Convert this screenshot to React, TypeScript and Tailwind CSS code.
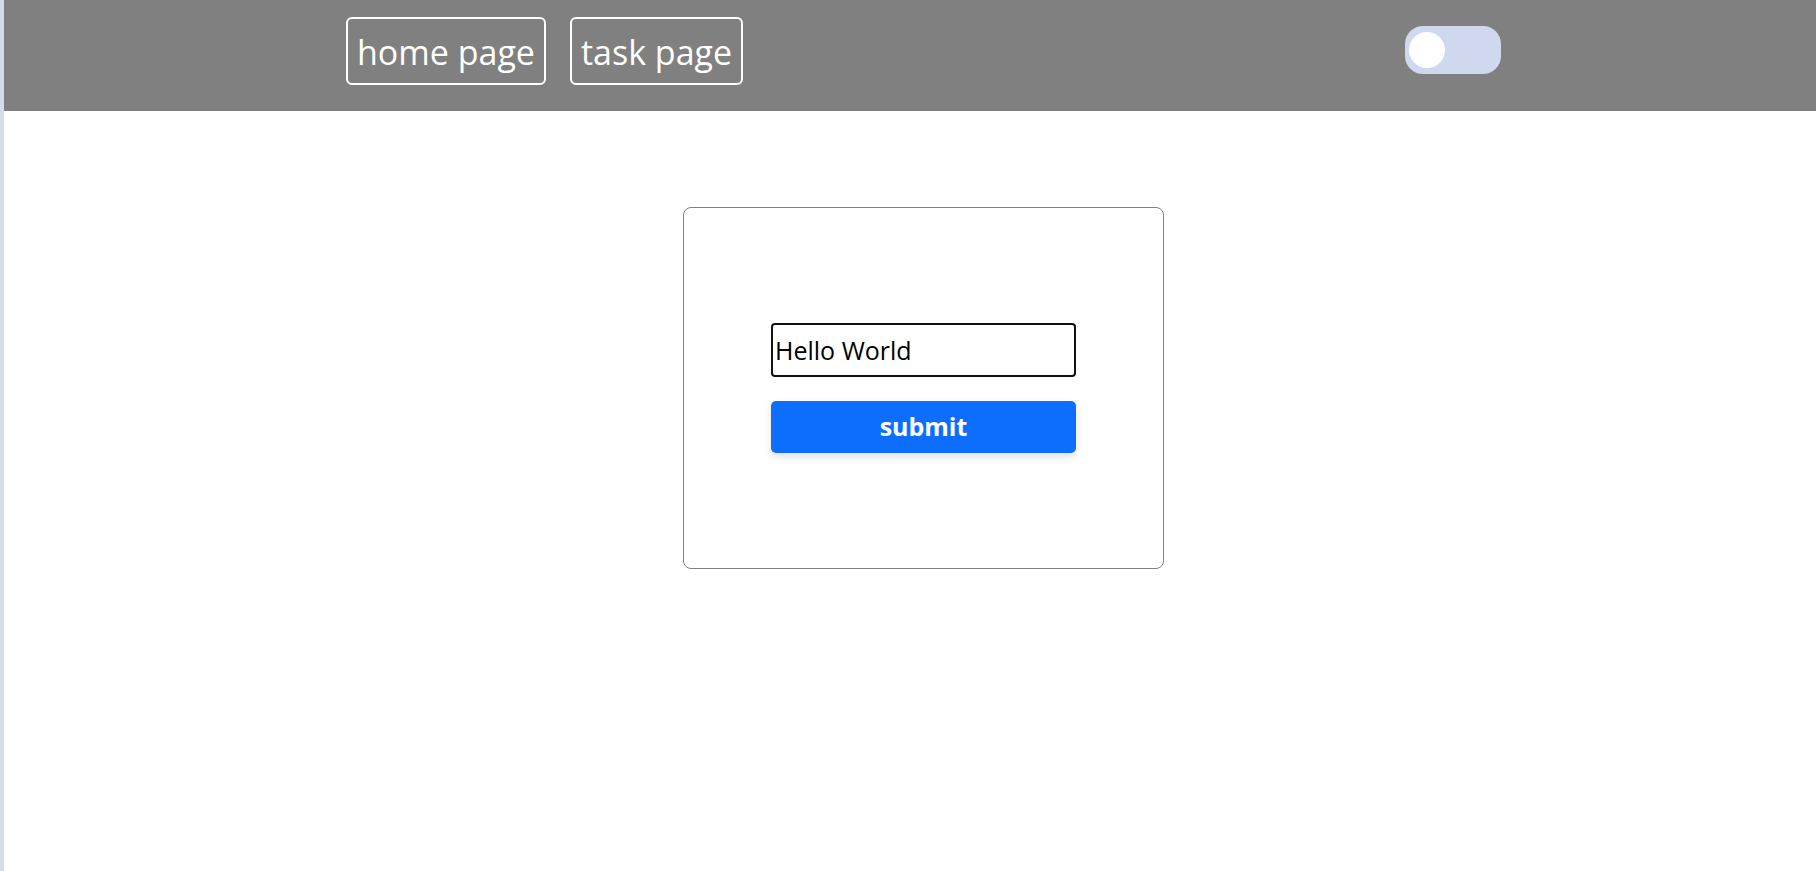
import React, { useState } from 'react';

const font = { fontFamily: '"Open Sans", "Noto Sans", Arial, sans-serif' };

function NavButton({ label }: { label: string }) {
  return (
    <button className="h-[68px] px-[9px] pt-[2px] border-2 border-white rounded-[6px] text-white text-[34px] leading-none bg-transparent">
      {label}
    </button>
  );
}

export default function App() {
  const [text, setText] = useState('Hello World');
  const [on, setOn] = useState(false);

  return (
    <div className="flex min-h-screen bg-[#d3dde6]" style={font}>
      <div className="w-[4px] shrink-0" />
      <div className="flex-1 bg-white">
        {/* header */}
        <header className="h-[111px] bg-[#808080] flex items-center pl-[342px]">
          <div className="flex gap-[24px] -mt-[10px]">
            <NavButton label="home page" />
            <NavButton label="task page" />
          </div>
          <button
            onClick={() => setOn(!on)}
            className="ml-[662px] w-[96px] h-[48px] rounded-[18px] bg-[#d0d8ef] flex items-center px-[4px] -mt-[11px]"
          >
            <span className={`block w-[36px] h-[36px] rounded-full bg-white ${on ? 'ml-auto' : ''}`} />
          </button>
        </header>

        {/* form card */}
        <div className="mt-[96px] ml-[679px] w-[481px] h-[362px] border border-[#808080] rounded-[8px] flex flex-col items-center justify-center gap-[24px]">
          <input
            value={text}
            onChange={(e) => setText(e.target.value)}
            className="w-[305px] h-[54px] border-2 border-[#111] rounded-[4px] px-[2px] text-[25px] text-black outline-none"
          />
          <button className="w-[305px] h-[52px] bg-[#0d6efd] rounded-[5px] text-white text-[25px] font-bold shadow-[0_4px_8px_rgba(0,0,0,0.12)]">
            submit
          </button>
        </div>
      </div>
    </div>
  );
}
